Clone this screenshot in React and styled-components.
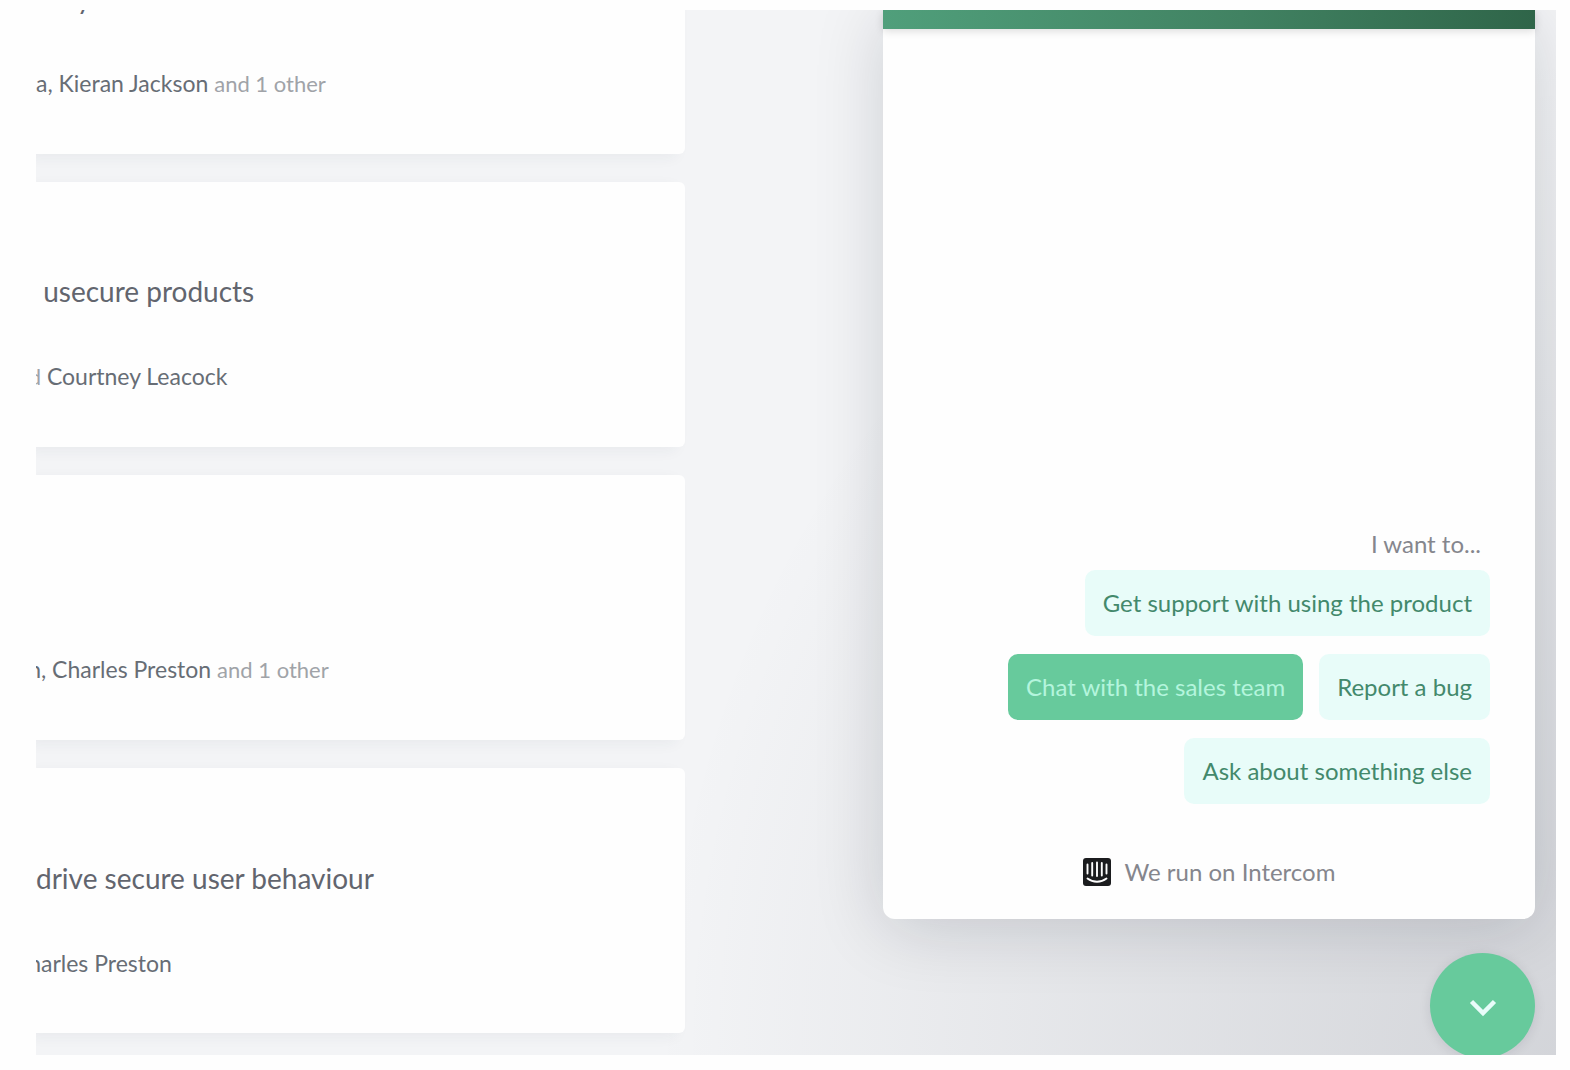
import React from "react";
import styled, { createGlobalStyle } from "styled-components";

const GlobalStyle = createGlobalStyle`
  * {
    box-sizing: border-box;
  }
  body {
    margin: 0;
    background: #fefefe;
    font-family: Lato, "Open Sans", sans-serif;
  }
`;

const Page = styled.main`
  height: 100vh;
  padding: 10px 14px 15px 36px;
`;

const Screen = styled.div`
  display: flex;
  height: 100%;
  overflow: hidden;
  padding-right: 21px;
  background: radial-gradient(
      900px 1000px at bottom right,
      rgba(29, 35, 54, 0.15),
      rgba(29, 35, 54, 0)
    )
    #f3f4f6;
`;

const Feed = styled.section`
  display: flex;
  flex: 1;
  flex-direction: column;
  gap: 28px;
  min-width: 0;
  margin-top: -121px;
  margin-right: 198px;
`;

const Card = styled.article`
  display: flex;
  flex: none;
  flex-direction: column;
  justify-content: flex-end;
  gap: 55px;
  height: 265px;
  padding-bottom: 56px;
  overflow: hidden;
  border-radius: 0 6px 6px 0;
  background: #fefefe;
  box-shadow: -8px 4px 14px rgba(40, 50, 70, 0.05);
`;

const Title = styled.h2`
  margin: 0;
  color: #62656e;
  font-size: 28px;
  font-weight: 400;
  line-height: 32px;
  white-space: pre;
`;

const Authors = styled.p`
  display: flex;
  align-items: baseline;
  margin: 0;
  color: #676d75;
  font-size: 23px;
  line-height: 28px;
  white-space: pre;
`;

const Muted = styled.span`
  color: #a0a3a8;
  font-size: 22px;
`;

/* a letter half hidden by the edge of the scrolled feed */
const CutLetter = styled.span`
  display: flex;
  justify-content: flex-end;
  width: 5px;
  overflow: hidden;
`;

const Messenger = styled.aside`
  display: grid;
  flex: none;
  grid-template-rows: 1fr 102px;
  gap: 34px;
  width: 652px;
`;

const Panel = styled.div`
  display: flex;
  flex-direction: column;
  border-radius: 0 0 12px 12px;
  background: #fefefe;
  box-shadow: 0 8px 70px rgba(15, 18, 35, 0.16);
`;

const PanelHeader = styled.header`
  height: 19px;
  background: linear-gradient(90deg, #509f7b, #418262 55%, #2f6549);
  box-shadow: 0 2px 8px rgba(0, 0, 0, 0.14);
`;

const Conversation = styled.div`
  display: flex;
  flex: 1;
  flex-direction: column;
  align-items: flex-end;
  justify-content: flex-end;
  padding: 0 45px;
`;

const Prompt = styled.p`
  margin: 0 9px 11px 0;
  color: #85868d;
  font-size: 24px;
  line-height: 30px;
`;

const Replies = styled.div`
  display: flex;
  flex-wrap: wrap;
  justify-content: flex-end;
  gap: 18px 16px;
`;

const Reply = styled.button`
  height: 66px;
  padding: 0 18px;
  border: 0;
  border-radius: 10px;
  background: ${props => (props.$active ? "#67ca9c" : "#e8fcf9")};
  color: ${props => (props.$active ? "#b4f5dd" : "#43896c")};
  font-family: inherit;
  font-size: 24px;
  line-height: 30px;
  cursor: pointer;
`;

const Credit = styled.a`
  display: flex;
  align-items: center;
  justify-content: center;
  gap: 14px;
  height: 94px;
  margin-top: 21px;
  color: #85868d;
  font-size: 24px;
  line-height: 30px;
  text-decoration: none;
`;

const Launcher = styled.button`
  display: flex;
  align-items: center;
  justify-content: center;
  justify-self: end;
  width: 105px;
  height: 105px;
  padding: 5px 0 0;
  border: 0;
  border-radius: 50%;
  background: #67ca9c;
  box-shadow: 0 2px 12px rgba(15, 18, 35, 0.1);
  cursor: pointer;
`;

const IntercomLogo = () => (
  <svg width="28" height="28" viewBox="0 0 28 28" aria-hidden="true">
    <rect width="28" height="28" rx="3" fill="#1b1c1e" />
    <g fill="none" stroke="#fefefe" strokeWidth="1.9" strokeLinecap="round">
      <path d="M4.5 6.5v9M9.2 5v12.5M14 4.5v13.5M18.8 5v12.5M23.5 6.5v9" />
      <path d="M4.5 20.5c5.5 4.3 13.5 4.3 19 0" />
    </g>
  </svg>
);

const replies = [
  "Get support with using the product",
  "Chat with the sales team",
  "Report a bug",
  "Ask about something else"
];

const App = () => (
  <>
    <GlobalStyle />
    <Page>
      <Screen>
        <Feed>
          <Card>
            <Title>arity</Title>
            <Authors>
              a, Kieran Jackson <Muted>and 1 other</Muted>
            </Authors>
          </Card>
          <Card>
            <Title> usecure products</Title>
            <Authors>
              <CutLetter>
                <Muted>d</Muted>
              </CutLetter>
              {" Courtney Leacock"}
            </Authors>
          </Card>
          <Card>
            <Authors>
              <CutLetter>n</CutLetter>
              {", Charles Preston "}
              <Muted>and 1 other</Muted>
            </Authors>
          </Card>
          <Card>
            <Title>drive secure user behaviour</Title>
            <Authors>
              <CutLetter>h</CutLetter>
              arles Preston
            </Authors>
          </Card>
          <Card />
        </Feed>
        <Messenger>
          <Panel>
            <PanelHeader />
            <Conversation>
              <Prompt>I want to...</Prompt>
              <Replies>
                {replies.map(text => (
                  <Reply key={text} $active={text.startsWith("Chat")}>
                    {text}
                  </Reply>
                ))}
              </Replies>
            </Conversation>
            <Credit href="#intercom">
              <IntercomLogo />
              We run on Intercom
            </Credit>
          </Panel>
          <Launcher aria-label="Close chat">
            <svg width="28" height="18" viewBox="0 0 28 18" aria-hidden="true">
              <path
                d="M2.5 2.5L14 14L25.5 2.5"
                fill="none"
                stroke="#e8fcf9"
                strokeWidth="4.5"
              />
            </svg>
          </Launcher>
        </Messenger>
      </Screen>
    </Page>
  </>
);

export default App;
